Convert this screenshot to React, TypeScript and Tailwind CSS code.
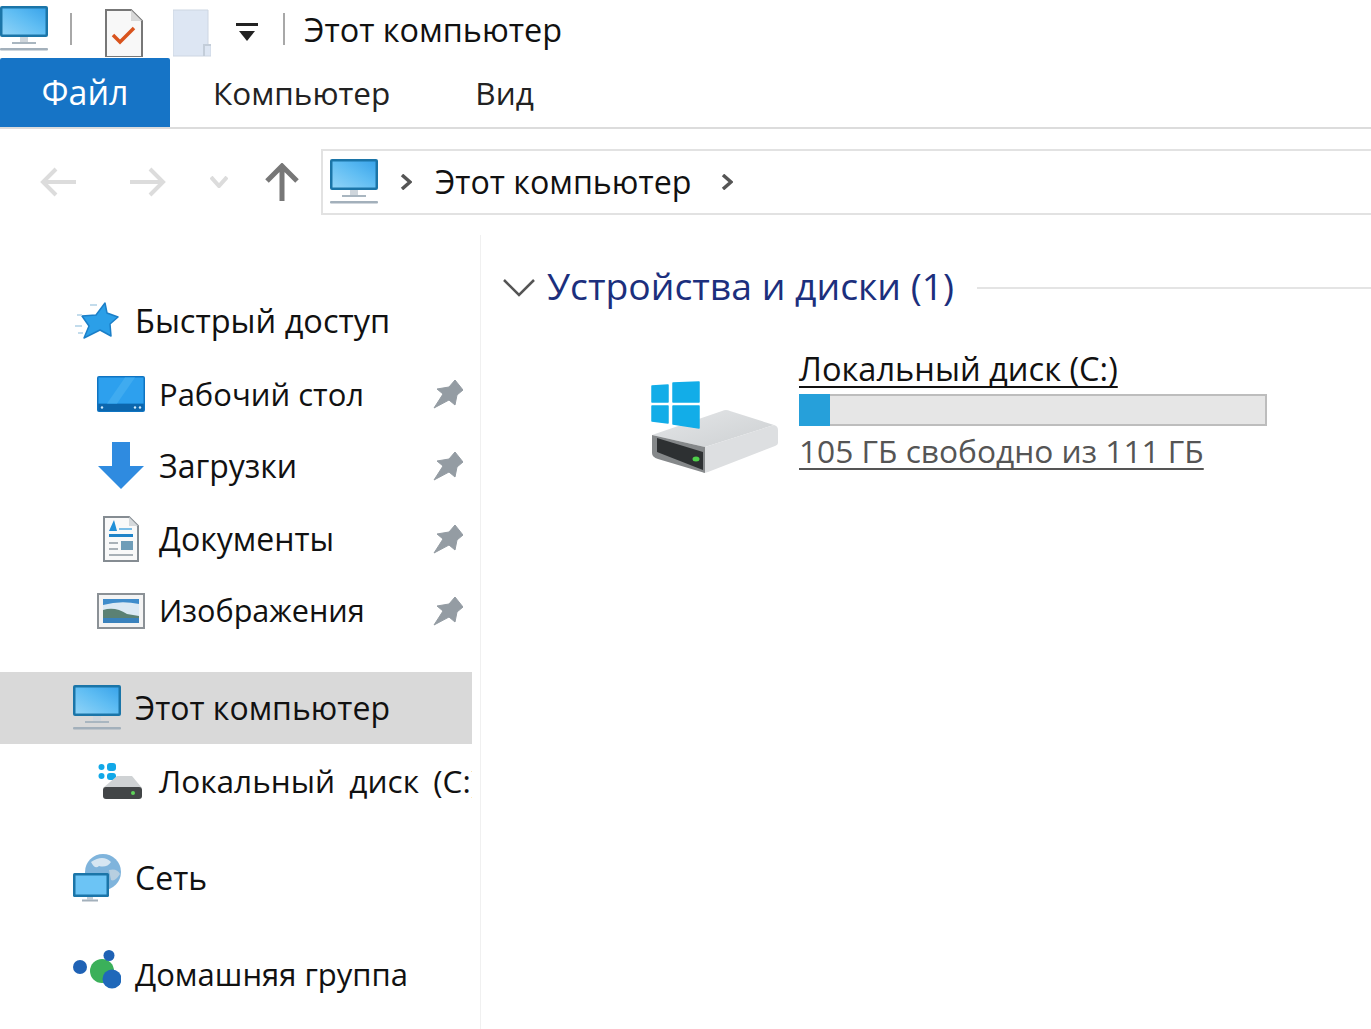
import type { ReactNode } from "react";

function PcIcon({ className = "h-[48px] w-[48px]" }: { className?: string }) {
  return (
    <svg viewBox="0 0 48 48" className={className}>
      <defs>
        <linearGradient id="pcScreen" x1="0" y1="1" x2="1" y2="0">
          <stop offset="0" stopColor="#8fd3f7" />
          <stop offset="0.55" stopColor="#5fbdf3" />
          <stop offset="1" stopColor="#3aa4ea" />
        </linearGradient>
      </defs>
      <rect x="0" y="1" width="48" height="31" rx="2" fill="#1b75a8" />
      <rect x="2.5" y="3.5" width="43" height="26" fill="url(#pcScreen)" />
      <rect x="12" y="37" width="24" height="2" fill="#a9b6c0" />
      <rect x="20" y="32" width="8" height="5" fill="#cfd6dc" />
      <rect x="0" y="43" width="48" height="2.5" rx="1" fill="#a3b0bb" />
    </svg>
  );
}

function Pin() {
  return (
    <svg viewBox="0 0 30 30" className="h-[30px] w-[30px]">
      <path d="M22 1 L30 11 L24 16 L22 26 L16 21 L1 29 L10 15 L4 10 L16 8 Z" fill="#949ca3" strokeLinejoin="round" stroke="#949ca3" strokeWidth="1" />
    </svg>
  );
}

function StarIcon() {
  return (
    <svg viewBox="0 0 44 38" className="h-[38px] w-[44px]">
      <path d="M30 1 L32 11 L43 15 L35 22 L36 34 L25 28 L9 36 L14 24 L7 14 L21 13 Z" fill="#2b9fe8" stroke="#1b7fc8" strokeWidth="1.5" strokeLinejoin="round" />
      <path d="M15 3 h7 M2 13 h5 M0 24 h7 M3 31 h5" stroke="#c3dcec" strokeWidth="2" />
    </svg>
  );
}

function DesktopIcon() {
  return (
    <svg viewBox="0 0 48 36" className="h-[36px] w-[48px]">
      <rect x="0" y="0" width="48" height="36" rx="2" fill="#0f74c2" />
      <rect x="1.5" y="1.5" width="45" height="26" fill="#2da0ee" />
      <path d="M28 1.5 H38 L20 27.5 H10 Z" fill="#3fabf0" />
      <rect x="1.5" y="28" width="45" height="7" fill="#0c66ad" />
      <circle cx="5" cy="31.5" r="1.2" fill="#cfe9fb" />
      <circle cx="38" cy="31.5" r="1.2" fill="#cfe9fb" />
      <circle cx="43" cy="31.5" r="1.2" fill="#cfe9fb" />
    </svg>
  );
}

function DownloadIcon() {
  return (
    <svg viewBox="0 0 46 48" className="h-[48px] w-[46px]">
      <path d="M14 0 H32 V24 H46 L23 47 L0 24 H14 Z" fill="#2f8be0" strokeLinejoin="round" />
    </svg>
  );
}

function DocsIcon() {
  return (
    <svg viewBox="0 0 36 48" className="h-[48px] w-[36px]">
      <path d="M1 2 H26 L35 11 V46 H1 Z" fill="#f9f9f9" stroke="#858c92" strokeWidth="2" />
      <path d="M26 2 V11 H35 Z" fill="#d5d9dc" />
      <path d="M6 16 L11 5 L14 16 Z" fill="#1f8fd8" />
      <rect x="16" y="13" width="13" height="2" fill="#7bbde6" />
      <rect x="6" y="19" width="24" height="3" fill="#1f83c8" />
      <path d="M6 28 h9 M6 34 h9" stroke="#a9b1b7" strokeWidth="2" />
      <rect x="18" y="26" width="12" height="9" fill="#6f9db8" />
      <path d="M6 40 h24" stroke="#a9b1b7" strokeWidth="2" />
    </svg>
  );
}

function PicturesIcon() {
  return (
    <svg viewBox="0 0 48 36" className="h-[36px] w-[48px]">
      <rect x="1" y="1" width="46" height="34" fill="#f4f4f4" stroke="#8b9196" strokeWidth="2" />
      <rect x="6" y="6" width="36" height="24" fill="#dbe9f4" />
      <path d="M6 6 H42 V11 Q24 7 6 12 Z" fill="#3f8ccb" />
      <path d="M6 17 Q18 13 30 21 L42 23 V25 H6 Z" fill="#5b8174" />
      <path d="M6 25 H42 V30 H6 Z" fill="#3a82bd" />
    </svg>
  );
}

function SmallDriveIcon() {
  return (
    <svg viewBox="0 0 46 40" className="h-[40px] w-[46px]">
      <circle cx="3.5" cy="7" r="3" fill="#12a8e8" />
      <circle cx="3.5" cy="16" r="3" fill="#12a8e8" />
      <rect x="9" y="3" width="9" height="8" rx="3" fill="#12a8e8" />
      <rect x="9" y="13" width="9" height="7" rx="3" fill="#12a8e8" />
      <path d="M5 28 L19 16 H34 L44 28 Z" fill="#cfd2d4" />
      <rect x="5" y="27" width="39" height="12" rx="3" fill="#424547" />
      <circle cx="35" cy="33" r="2" fill="#5fd35a" />
    </svg>
  );
}

function NetworkIcon() {
  return (
    <svg viewBox="0 0 48 48" className="h-[48px] w-[48px]">
      <circle cx="30" cy="18" r="18" fill="#7fb4dc" />
      <path d="M18 8 Q30 0 38 8 Q34 14 26 12 Q22 16 18 8 Z" fill="#d6e6f2" />
      <path d="M36 16 Q44 14 47 20 Q42 28 38 26 Z" fill="#b7cfe0" />
      <rect x="0" y="19" width="36" height="24" rx="1.5" fill="#1b75a8" />
      <rect x="2.5" y="21.5" width="31" height="19" fill="#6cc4f5" />
      <rect x="14" y="43" width="6" height="2.5" fill="#c5ced5" />
      <rect x="9" y="45.5" width="16" height="2" fill="#a3b0bb" />
    </svg>
  );
}

function HomeGroupIcon() {
  return (
    <svg viewBox="0 0 48 48" className="h-[48px] w-[48px]">
      <circle cx="29" cy="21" r="12" fill="#3bb05a" />
      <circle cx="7" cy="17" r="7" fill="#1f62b5" />
      <circle cx="36" cy="5.5" r="5.5" fill="#1f62b5" />
      <circle cx="39" cy="29" r="9.5" fill="#1f68ba" />
    </svg>
  );
}

function BigDriveIcon() {
  return (
    <svg viewBox="0 0 128 98" className="h-[98px] w-[128px]">
      <defs>
        <linearGradient id="driveTop" x1="0" y1="0" x2="1" y2="1">
          <stop offset="0" stopColor="#e4e6e8" />
          <stop offset="1" stopColor="#cdd0d2" />
        </linearGradient>
      </defs>
      <path d="M2 57 L72 33 Q76 31 80 33 L124 47 L55 69 Z" fill="url(#driveTop)" />
      <path d="M55 69 L124 47 Q128 48 128 52 V65 Q128 67 125 68 L58 94 Q55 95 53 95 Z" fill="#dddfe1" />
      <path d="M2 57 L55 69 V95 L8 81 Q2 79 2 75 Z" fill="#85888a" />
      <path d="M7 60 L53 74 V92 L7 74 Z" fill="#2d3032" />
      <ellipse cx="46" cy="81" rx="3.5" ry="2.5" fill="#4fd04a" />
      <path d="M2 8 L18 7 V24 H2 Z M23 5 L49 4 V24 H23 Z M2 28 H18 V45 L2 43 Z M23 28 H49 V50 L23 46 Z" fill="#12ade8" stroke="#12ade8" strokeWidth="1.5" strokeLinejoin="round" />
    </svg>
  );
}

const pinned: { label: string; icon: ReactNode; size?: string }[] = [
  { label: "Рабочий стол", icon: <DesktopIcon />, size: "text-[31px]" },
  { label: "Загрузки", icon: <DownloadIcon /> },
  { label: "Документы", icon: <DocsIcon /> },
  { label: "Изображения", icon: <PicturesIcon />, size: "text-[30.6px]" },
];

function TreeRow({ icon, label, sub, active, pin, size = "text-[32px]" }: { icon: ReactNode; label: string; sub?: boolean; active?: boolean; pin?: boolean; size?: string }) {
  return (
    <div className={`flex h-[72.5px] shrink-0 items-center whitespace-nowrap text-[#111] ${size} ${sub ? "pl-[97px]" : "pl-[73px]"} ${active ? "bg-[#d9d9d9]" : ""}`}>
      <span className="flex w-[62px] shrink-0 items-center justify-center pr-[14px]">{icon}</span>
      <span className="flex-1">{label}</span>
      {pin && (
        <span className="mr-[9px] flex">
          <Pin />
        </span>
      )}
    </div>
  );
}

export default function App() {
  return (
    <div className="flex h-[1029px] w-[1371px] flex-col overflow-hidden bg-white font-['Open_Sans',sans-serif]">
      {/* title bar */}
      <div className="flex h-[58px] shrink-0 items-center text-[32.4px] text-[#111]">
        <PcIcon />
        <span className="ml-[22px] h-[32px] w-[2px] bg-[#a8a8a8]" />
        <svg viewBox="0 0 38 48" className="ml-[33px] mt-[8px] h-[48px] w-[38px]">
          <path d="M1 1 H26 L37 12 V48 H1 Z" fill="#f8f8f8" stroke="#777" strokeWidth="2" />
          <path d="M26 1 V12 H37 Z" fill="#d8d8d8" />
          <path d="M8 26 L15 33 L29 19" fill="none" stroke="#d9541e" strokeWidth="3.5" />
        </svg>
        <svg viewBox="0 0 38 48" className="ml-[30px] mt-[8px] h-[48px] w-[38px]">
          <path d="M0 1 H35 V36 H38 V47 H0 Z" fill="#dde6f3" stroke="#cdd6e2" strokeWidth="1" />
          <path d="M31 47 V36 H38" fill="none" stroke="#c3cdd9" strokeWidth="2" />
        </svg>
        <svg viewBox="0 0 22 20" className="ml-[25px] mt-[8px] h-[20px] w-[22px]">
          <rect x="0" y="0" width="22" height="3" fill="#222" />
          <path d="M3 8 H19 L11 18 Z" fill="#222" />
        </svg>
        <span className="ml-[25px] h-[32px] w-[2px] bg-[#a8a8a8]" />
        <span className="ml-[19px] pt-[1px]">Этот компьютер</span>
      </div>

      {/* ribbon tabs */}
      <div className="flex h-[71px] shrink-0 border-b-[2px] border-[#dcdcdc] text-[31.5px] text-[#222]">
        <div className="flex w-[170px] items-center justify-center rounded-t-[2px] bg-[#1674c6] text-[34px] text-white">Файл</div>
        <div className="ml-[43px] flex items-center">Компьютер</div>
        <div className="ml-[85px] flex items-center">Вид</div>
      </div>

      {/* navigation bar */}
      <div className="flex h-[106px] shrink-0 items-start pt-[20px]">
        <div className="flex h-[65px] items-center">
          <svg viewBox="0 0 36 30" className="ml-[40px] h-[30px] w-[36px]" fill="none" stroke="#dcdcdc" strokeWidth="4">
            <path d="M36 15 H3 M16 2 L3 15 L16 28" />
          </svg>
          <svg viewBox="0 0 36 30" className="ml-[54px] h-[30px] w-[36px]" fill="none" stroke="#dcdcdc" strokeWidth="4">
            <path d="M0 15 H33 M20 2 L33 15 L20 28" />
          </svg>
          <svg viewBox="0 0 18 12" className="ml-[44px] h-[12px] w-[18px]" fill="none" stroke="#dcdcdc" strokeWidth="4">
            <path d="M1 1 L9 10 L17 1" />
          </svg>
          <svg viewBox="0 0 34 38" className="ml-[37px] h-[38px] w-[34px]" fill="none" stroke="#777" strokeWidth="5">
            <path d="M17 38 V4 M2 18 L17 3 L32 18" />
          </svg>
        </div>
        <div className="ml-[22px] flex h-[66px] flex-1 items-center border-y-[2px] border-l-[2px] border-[#e2e2e2] text-[32.2px] text-[#111]">
          <span className="ml-[7px] flex">
            <PcIcon />
          </span>
          <svg viewBox="0 0 12 16" className="ml-[22px] h-[16px] w-[12px]" fill="none" stroke="#555" strokeWidth="3.5">
            <path d="M2 1 L10 8 L2 15" />
          </svg>
          <span className="ml-[23px]">Этот компьютер</span>
          <svg viewBox="0 0 12 16" className="ml-[30px] h-[16px] w-[12px]" fill="none" stroke="#555" strokeWidth="3.5">
            <path d="M2 1 L10 8 L2 15" />
          </svg>
        </div>
      </div>

      <div className="flex min-h-0 flex-1">
        {/* tree */}
        <aside className="w-[481px] shrink-0 border-r-[1px] border-[#f0f0f0] pr-[8px]">
          <div className="flex w-[472px] flex-col overflow-hidden pt-[50px]">
            <TreeRow icon={<StarIcon />} label="Быстрый доступ" size="text-[32.5px]" />
            {pinned.map((item) => (
              <TreeRow key={item.label} icon={item.icon} label={item.label} size={item.size} sub pin />
            ))}
            <div className="mt-[24px]">
              <TreeRow icon={<PcIcon />} label="Этот компьютер" active />
            </div>
            <TreeRow icon={<SmallDriveIcon />} label="Локальный диск (C:)" size="text-[31.6px] [word-spacing:6px]" sub />
            <div className="mt-[25px]">
              <TreeRow icon={<NetworkIcon />} label="Сеть" />
            </div>
            <div className="mt-[24px]">
              <TreeRow icon={<HomeGroupIcon />} label="Домашняя группа" size="text-[31px]" />
            </div>
          </div>
        </aside>

        {/* content */}
        <main className="min-w-0 flex-1">
          <div className="ml-[22px] mt-[27px] flex h-[48px] items-center text-[37.3px] text-[#1c2f7d]">
            <svg viewBox="0 0 32 18" className="mt-[3px] h-[18px] w-[32px] shrink-0" fill="none" stroke="#555" strokeWidth="2.5">
              <path d="M1 1 L16 16 L31 1" />
            </svg>
            <span className="ml-[12px] whitespace-nowrap">Устройства и диски (1)</span>
            <span className="ml-[23px] mt-[3px] h-[2px] flex-1 bg-[#e4e4e4]" />
          </div>
          <div className="ml-[169px] mt-[42px] flex items-start">
            <span className="mt-[26px] flex shrink-0">
              <BigDriveIcon />
            </span>
            <div className="ml-[21px] w-[468px]">
              <div className="h-[34px] whitespace-nowrap text-[32.6px] leading-[34px] text-[#111] underline decoration-2 underline-offset-[5px] [text-decoration-skip-ink:none]">Локальный диск (C:)</div>
              <div className="mt-[8px] h-[32px] border-[2px] border-[#bdbdbd] bg-[#e6e6e6]">
                <div className="-ml-[2px] -mt-[2px] h-[32px] w-[31px] bg-[#26a0da]" />
              </div>
              <div className="mt-[8px] whitespace-nowrap text-[31.7px] leading-[34px] text-[#555] underline decoration-2 underline-offset-[5px] [text-decoration-skip-ink:none]">105 ГБ свободно из 111 ГБ</div>
            </div>
          </div>
        </main>
      </div>
    </div>
  );
}
